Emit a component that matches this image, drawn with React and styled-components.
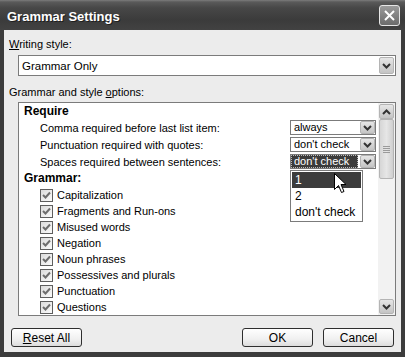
import React from 'react';
import styled, { createGlobalStyle } from 'styled-components';

const Global = createGlobalStyle`
  html, body { margin: 0; padding: 0; background: #3b3b3b; }
  body { font-family: "Liberation Sans", Arial, sans-serif; font-size: 11px; color: #000; }
`;

const Window = styled.div`
  width: 405px;
  height: 357px;
  display: flex;
  flex-direction: column;
  background: #3c3c3c;
  overflow: hidden;
`;

const TitleBar = styled.div`
  height: 30px;
  flex: none;
  display: flex;
  align-items: center;
  padding: 0 5px 0 7px;
  background: linear-gradient(to bottom, #7c7c7c 0px, #5a5a5a 2px, #474747 8px, #3b3b3b 20px, #424242 30px);
`;

const Title = styled.div`
  flex: 1;
  color: #fff;
  font-weight: bold;
  font-size: 13px;
  padding-top: 2px;
  text-shadow: 1px 1px 0 #1e1e1e;
`;

const CloseBtn = styled.div`
  width: 21px;
  height: 21px;
  box-sizing: border-box;
  border: 1px solid #e6e6e6;
  border-radius: 3px;
  background: linear-gradient(to bottom, #9a9a9a, #6c6c6c);
  display: flex;
  align-items: center;
  justify-content: center;
`;

const Frame = styled.div`
  flex: 1;
  display: flex;
  padding: 0 4px 5px 4px;
`;

const Body = styled.div`
  flex: 1;
  display: flex;
  flex-direction: column;
  background: #ececec;
  padding: 8px 5px 5px 5px;
`;

const FieldLabel = styled.div`
  height: 13px;
  line-height: 13px;
  margin-top: ${p => p.$mt || 0}px;
`;

const U = styled.span`
  text-decoration: underline;
`;

const Combo = styled.div`
  margin: 4px 0 0 9px;
  height: 21px;
  box-sizing: border-box;
  border: 1px solid #7b7b7b;
  background: #fff;
  display: flex;
  align-items: center;
  padding: 1px 1px 1px 3px;
`;

const ComboText = styled.div`
  flex: 1;
  font-size: 11.5px;
`;

const ArrowBtn = styled.div`
  width: ${p => p.$w || 15}px;
  height: ${p => p.$h || 17}px;
  box-sizing: border-box;
  border: 1px solid #b4b4b4;
  border-radius: 2px;
  background: linear-gradient(to bottom, #e6e6e6, #c4c4c4);
  display: flex;
  align-items: center;
  justify-content: center;
  flex: none;
`;

const ListBox = styled.div`
  margin: 3px 0 0 9px;
  height: 214px;
  box-sizing: border-box;
  border: 1px solid #7b7b7b;
  background: #fff;
  display: flex;
`;

const ListContent = styled.div`
  flex: 1;
  display: flex;
  flex-direction: column;
  overflow: hidden;
`;

const Heading = styled.div`
  height: ${p => p.$h}px;
  line-height: ${p => p.$h}px;
  padding-left: 5px;
  font-weight: bold;
  font-size: 12px;
`;

const OptionRow = styled.div`
  height: 18px;
  display: flex;
  align-items: center;
  padding: 0 2px 0 21px;
`;

const RowLabel = styled.div`
  flex: 1;
`;

const SelectBox = styled.div`
  position: relative;
  width: 86px;
  height: 15px;
  box-sizing: border-box;
  border: 1px solid #7b7b7b;
  background: #fff;
  display: flex;
  align-items: stretch;
`;

const SelectText = styled.div`
  flex: 1;
  line-height: 13px;
  padding-left: 3px;
  margin-right: 2px;
  background: ${p => (p.$focus ? '#3b3b3b' : 'transparent')};
  color: ${p => (p.$focus ? '#fff' : '#000')};
  outline: ${p => (p.$focus ? '1px dotted #bbb' : 'none')};
  outline-offset: -1px;
`;

const Popup = styled.div`
  position: absolute;
  top: calc(100% + 2px);
  left: -1px;
  width: 73px;
  box-sizing: border-box;
  border: 1px solid #7b7b7b;
  background: #fff;
  padding: 1px;
  z-index: 5;
`;

const PopItem = styled.div`
  height: 16px;
  line-height: 16px;
  padding-left: 3px;
  font-size: 12px;
  background: ${p => (p.$active ? '#3c3c3c' : 'transparent')};
  color: ${p => (p.$active ? '#fff' : '#000')};
`;

const Cursor = styled.svg`
  position: absolute;
  left: 43px;
  top: 2px;
  z-index: 6;
`;

const CheckRow = styled.div`
  height: 16px;
  flex: none;
  display: flex;
  align-items: center;
  gap: 4px;
  padding-left: 21px;
`;

const Check = styled.div`
  width: 13px;
  height: 13px;
  box-sizing: border-box;
  border: 1px solid #5e5e5e;
  background: linear-gradient(135deg, #dcdcdc, #fbfbfb);
  display: flex;
  align-items: center;
  justify-content: center;
  flex: none;
`;

const ScrollBar = styled.div`
  width: 17px;
  flex: none;
  box-sizing: border-box;
  padding: 1px;
  background: #f2f2f2;
  display: flex;
  flex-direction: column;
`;

const Thumb = styled.div`
  height: 60px;
  box-sizing: border-box;
  border: 1px solid #b4b4b4;
  border-radius: 2px;
  background: linear-gradient(to right, #d6d6d6, #e6e6e6 50%, #cfcfcf);
  display: flex;
  align-items: center;
  justify-content: center;
`;

const Track = styled.div`
  flex: 1;
`;

const ButtonRow = styled.div`
  margin-top: 12px;
  display: flex;
  gap: 10px;
  padding: 0 2px;
`;

const Spacer = styled.div`
  flex: 1;
`;

const Button = styled.div`
  width: 71px;
  height: 19px;
  box-sizing: border-box;
  border: 1px solid #2e2e2e;
  border-radius: 3px;
  background: linear-gradient(to bottom, #ffffff, #f0f0f0 60%, #dcdcdc);
  display: flex;
  align-items: center;
  justify-content: center;
  font-size: 12px;
`;

const Chevron = ({ up }) => (
  <svg width="9" height="6" viewBox="0 0 9 6">
    <polyline
      points={up ? '1,5 4.5,1.5 8,5' : '1,1 4.5,4.5 8,1'}
      fill="none"
      stroke="#333"
      strokeWidth="2"
    />
  </svg>
);

const Tick = () => (
  <svg width="9" height="9" viewBox="0 0 9 9">
    <polyline points="1,4 3.5,6.5 8,1.5" fill="none" stroke="#6e6e6e" strokeWidth="2" />
  </svg>
);

const Grip = () => (
  <svg width="7" height="7" viewBox="0 0 7 7">
    <g stroke="#9a9a9a" strokeWidth="1">
      <line x1="0" y1="0.5" x2="7" y2="0.5" />
      <line x1="0" y1="2.5" x2="7" y2="2.5" />
      <line x1="0" y1="4.5" x2="7" y2="4.5" />
      <line x1="0" y1="6.5" x2="7" y2="6.5" />
    </g>
  </svg>
);

const options = [
  { label: 'Comma required before last list item:', value: 'always' },
  { label: 'Punctuation required with quotes:', value: "don't check" },
  { label: 'Spaces required between sentences:', value: "don't check", focus: true },
];

const checks = [
  'Capitalization',
  'Fragments and Run-ons',
  'Misused words',
  'Negation',
  'Noun phrases',
  'Possessives and plurals',
  'Punctuation',
  'Questions',
];

export default function App() {
  return (
    <>
      <Global />
      <Window>
        <TitleBar>
          <Title>Grammar Settings</Title>
          <CloseBtn>
            <svg width="11" height="11" viewBox="0 0 11 11">
              <g stroke="#fff" strokeWidth="2">
                <line x1="1" y1="1" x2="10" y2="10" />
                <line x1="10" y1="1" x2="1" y2="10" />
              </g>
            </svg>
          </CloseBtn>
        </TitleBar>
        <Frame>
          <Body>
            <FieldLabel>
              <U>W</U>riting style:
            </FieldLabel>
            <Combo>
              <ComboText>Grammar Only</ComboText>
              <ArrowBtn $w={15} $h={17}>
                <Chevron />
              </ArrowBtn>
            </Combo>
            <FieldLabel $mt={10}>
              Grammar and style <U>o</U>ptions:
            </FieldLabel>
            <ListBox>
              <ListContent>
                <Heading $h={16}>Require</Heading>
                {options.map(o => (
                  <OptionRow key={o.label}>
                    <RowLabel>{o.label}</RowLabel>
                    <SelectBox>
                      <SelectText $focus={o.focus}>{o.value}</SelectText>
                      <ArrowBtn $w={15} $h={13}>
                        <Chevron />
                      </ArrowBtn>
                      {o.focus && (
                        <Popup>
                          <PopItem $active>1</PopItem>
                          <PopItem>2</PopItem>
                          <PopItem>don't check</PopItem>
                          <Cursor width="13" height="21" viewBox="0 0 13 21">
                            <path
                              d="M0.5 0.5 L0.5 16.5 L4.5 12.5 L7.5 19.5 L10 18.5 L7 11.5 L12 11.5 Z"
                              fill="#fff"
                              stroke="#000"
                              strokeWidth="1"
                            />
                          </Cursor>
                        </Popup>
                      )}
                    </SelectBox>
                  </OptionRow>
                ))}
                <Heading $h={17}>Grammar:</Heading>
                {checks.map(c => (
                  <CheckRow key={c}>
                    <Check>
                      <Tick />
                    </Check>
                    <span>{c}</span>
                  </CheckRow>
                ))}
              </ListContent>
              <ScrollBar>
                <ArrowBtn $w={15} $h={15}>
                  <Chevron up />
                </ArrowBtn>
                <Thumb>
                  <Grip />
                </Thumb>
                <Track />
                <ArrowBtn $w={15} $h={15}>
                  <Chevron />
                </ArrowBtn>
              </ScrollBar>
            </ListBox>
            <ButtonRow>
              <Button>
                <span>
                  <U>R</U>eset All
                </span>
              </Button>
              <Spacer />
              <Button>OK</Button>
              <Button>Cancel</Button>
            </ButtonRow>
          </Body>
        </Frame>
      </Window>
    </>
  );
}
